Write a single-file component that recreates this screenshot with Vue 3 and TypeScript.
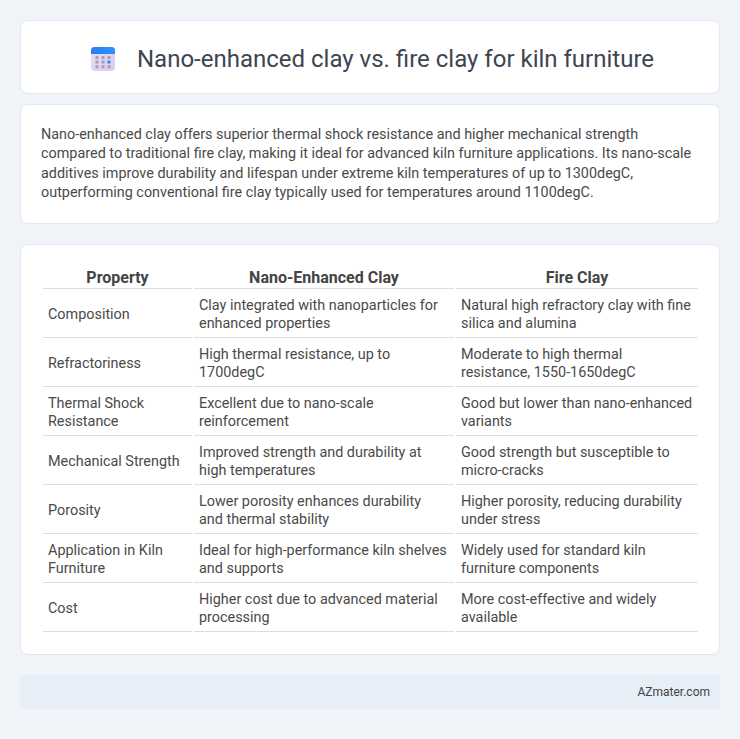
<script setup lang="ts">
const rows: string[][] = [
  ['Composition', 'Clay integrated with nanoparticles for enhanced properties', 'Natural high refractory clay with fine silica and alumina'],
  ['Refractoriness', 'High thermal resistance, up to 1700degC', 'Moderate to high thermal resistance, 1550-1650degC'],
  ['Thermal Shock Resistance', 'Excellent due to nano-scale reinforcement', 'Good but lower than nano-enhanced variants'],
  ['Mechanical Strength', 'Improved strength and durability at high temperatures', 'Good strength but susceptible to micro-cracks'],
  ['Porosity', 'Lower porosity enhances durability and thermal stability', 'Higher porosity, reducing durability under stress'],
  ['Application in Kiln Furniture', 'Ideal for high-performance kiln shelves and supports', 'Widely used for standard kiln furniture components'],
  ['Cost', 'Higher cost due to advanced material processing', 'More cost-effective and widely available'],
]
const dots: number[][] = [[0,0],[1,0],[2,0],[0,1],[1,1],[2,1],[0,2],[1,2],[2,2]]
</script>

<template>
  <div class="page">
    <header class="card head">
      <svg class="icon" width="24" height="24" viewBox="0 0 24 24" aria-hidden="true">
        <defs>
          <linearGradient id="bodyG" x1="0" y1="0" x2="1" y2="1">
            <stop offset="0" stop-color="#e3dfec" />
            <stop offset="1" stop-color="#dccdf0" />
          </linearGradient>
          <linearGradient id="topG" x1="0" y1="0" x2="1" y2="0">
            <stop offset="0" stop-color="#2f7bf0" />
            <stop offset="1" stop-color="#2a93fb" />
          </linearGradient>
        </defs>
        <rect x="0" y="0" width="24" height="24" rx="3.5" fill="url(#bodyG)" />
        <path d="M0 7V3.5A3.5 3.5 0 0 1 3.5 0h17A3.5 3.5 0 0 1 24 3.5V7Z" fill="url(#topG)" />
        <rect v-for="(d, i) in dots" :key="i" :x="4.5 + d[0] * 6" :y="9 + d[1] * 4.6" width="3" height="3" rx=".5" :fill="i === 5 ? '#2a8cf5' : '#a99cba'" />
      </svg>
      <h1>Nano-enhanced clay vs. fire clay for kiln furniture</h1>
    </header>

    <section class="card desc">
      <p>Nano-enhanced clay offers superior thermal shock resistance and higher mechanical strength compared to traditional fire clay, making it ideal for advanced kiln furniture applications. Its nano-scale additives improve durability and lifespan under extreme kiln temperatures of up to 1300degC, outperforming conventional fire clay typically used for temperatures around 1100degC.</p>
    </section>

    <section class="card tablecard">
      <table>
        <colgroup>
          <col class="c1" /><col class="c2" /><col class="c3" />
        </colgroup>
        <thead>
          <tr><th>Property</th><th>Nano-Enhanced Clay</th><th>Fire Clay</th></tr>
        </thead>
        <tbody>
          <tr v-for="r in rows" :key="r[0]">
            <td v-for="(c, i) in r" :key="i">{{ c }}</td>
          </tr>
        </tbody>
      </table>
    </section>

    <footer class="foot">AZmater.com</footer>
  </div>
</template>

<style>
html, body { margin: 0; background: #f0f4f9; }
</style>

<style scoped>
.page {
  box-sizing: border-box;
  width: 740px;
  padding: 20px 20px 30px;
  font-family: Roboto, "Liberation Sans", sans-serif;
  color: #444;
  display: flex;
  flex-direction: column;
}
.card {
  background: #fff;
  border: 1px solid #e3e7f0;
  border-radius: 8px;
  box-sizing: border-box;
}
.head {
  height: 74px;
  display: flex;
  align-items: center;
  justify-content: center;
  gap: 22px;
  margin-bottom: 10px;
  padding: 4px 0 0 5px;
}
.icon { flex: none; }
h1 {
  margin: 0;
  font-size: 24px;
  font-weight: 400;
  line-height: 32px;
  color: #3d4452;
}
.desc {
  height: 120px;
  padding: 20px;
  margin-bottom: 20px;
}
p {
  margin: 0;
  font-size: 14.4px;
  line-height: 19.44px;
  color: #4a4a4a;
}
.tablecard {
  height: 411px;
  padding: 20px;
  margin-bottom: 20px;
}
table {
  width: 658px;
  border-collapse: separate;
  border-spacing: 2px;
  table-layout: fixed;
}
.c1 { width: 149px; }
.c2 { width: 260px; }
.c3 { width: 242px; }
th {
  font-size: 16px;
  font-weight: 700;
  line-height: 21px;
  color: #444;
  text-align: center;
  padding: 0;
  height: 21px;
  border-bottom: 1px solid #ddd;
}
td {
  font-size: 14.4px;
  line-height: 18px;
  color: #4a4a4a;
  padding: 6px 5px 4px;
  border-bottom: 1px solid #ddd;
  vertical-align: middle;
}
td:nth-child(2) { padding-right: 7px; }
.foot {
  height: 34px;
  box-sizing: border-box;
  background: #e6eef8;
  font-size: 12px;
  line-height: 34px;
  text-align: right;
  padding-right: 10px;
  color: #444;
}
</style>
